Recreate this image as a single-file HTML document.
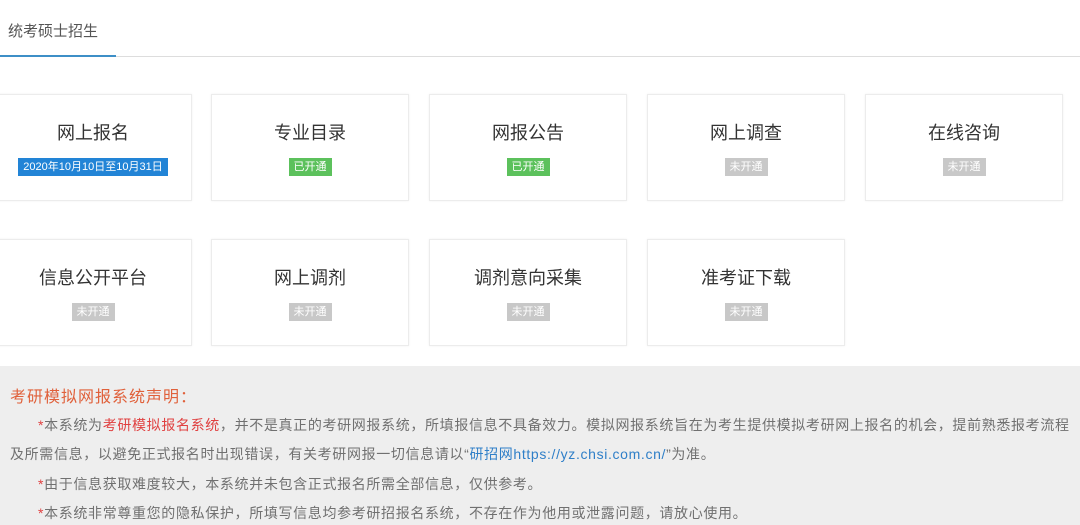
<!DOCTYPE html>
<html><head><meta charset="utf-8"><style>
body{margin:0;width:1080px;height:525px;overflow:hidden;background:#fff;font-family:"Liberation Sans","Noto Sans CJK SC",sans-serif;position:relative}
.tab{position:absolute;left:8px;top:20px;font-size:15px;color:#555}
.line{position:absolute;left:0;top:56px;width:1080px;height:1px;background:#ddd}
.ul{position:absolute;left:0;top:55px;width:116px;height:2px;background:#3d8fc7}
.card{position:absolute;width:198px;height:107px;border:1px solid #ececec;box-shadow:0 0 3px rgba(0,0,0,.05);text-align:center;box-sizing:border-box}
.card .t{margin-top:26px;font-size:18px;color:#333;line-height:24px}
.b{display:inline-block;margin-top:13px;font-size:11px;color:#fff;padding:0 5px;height:18px;line-height:18px}
.blue{background:#2284d6}.green{background:#5cc15c}.gray{background:#c8c8c8}
.notice{position:absolute;left:0;top:366px;width:1080px;height:159px;background:#eeeeee;font-size:14px;color:#707070;letter-spacing:0.65px}
.notice p{margin:0;position:absolute;left:10px;white-space:nowrap}
.r{color:#e04040}.h{color:#e0603a;font-size:16px;letter-spacing:1px}.lk{color:#2f7fc8}
</style></head><body>
<div class="tab">统考硕士招生</div>
<div class="line"></div><div class="ul"></div>

<div class="card" style="left:-6px;top:94px"><div class="t">网上报名</div><span class="b blue">2020年10月10日至10月31日</span></div>
<div class="card" style="left:211px;top:94px"><div class="t">专业目录</div><span class="b green">已开通</span></div>
<div class="card" style="left:429px;top:94px"><div class="t">网报公告</div><span class="b green">已开通</span></div>
<div class="card" style="left:647px;top:94px"><div class="t">网上调查</div><span class="b gray">未开通</span></div>
<div class="card" style="left:865px;top:94px"><div class="t">在线咨询</div><span class="b gray">未开通</span></div>

<div class="card" style="left:-6px;top:239px"><div class="t">信息公开平台</div><span class="b gray">未开通</span></div>
<div class="card" style="left:211px;top:239px"><div class="t">网上调剂</div><span class="b gray">未开通</span></div>
<div class="card" style="left:429px;top:239px"><div class="t">调剂意向采集</div><span class="b gray">未开通</span></div>
<div class="card" style="left:647px;top:239px"><div class="t">准考证下载</div><span class="b gray">未开通</span></div>

<div class="notice">
<p class="h" style="top:17px">考研模拟网报系统声明：</p>
<p style="top:49px;left:38px"><span class="r">*</span>本系统为<span class="r">考研模拟报名系统</span>，并不是真正的考研网报系统，所填报信息不具备效力。模拟网报系统旨在为考生提供模拟考研网上报名的机会，提前熟悉报考流程</p>
<p style="top:78px">及所需信息，以避免正式报名时出现错误，有关考研网报一切信息请以“<span class="lk">研招网https://yz.chsi.com.cn/</span>”为准。</p>
<p style="top:108px;left:38px"><span class="r">*</span>由于信息获取难度较大，本系统并未包含正式报名所需全部信息，仅供参考。</p>
<p style="top:137px;left:38px"><span class="r">*</span>本系统非常尊重您的隐私保护，所填写信息均参考研招报名系统，不存在作为他用或泄露问题，请放心使用。</p>
</div>
</body></html>
